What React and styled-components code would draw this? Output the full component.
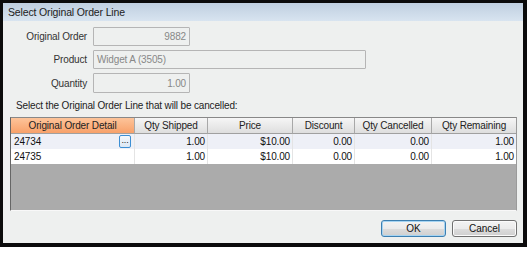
import styled, {createGlobalStyle} from 'styled-components'

const GlobalStyle = createGlobalStyle`
  body {
    margin: 0;
    background: #ffffff;
    font-family: 'Liberation Sans', Arial, sans-serif;
    letter-spacing: -0.15px;
  }
`

const Frame = styled.div`
  box-sizing: border-box;
  width: 527px;
  height: 247px;
  border: 3px solid #0b0b0b;
  border-right-width: 4px;
  border-bottom-width: 4px;
  background: #eef0ef;
  display: flex;
  flex-direction: column;
`

const TitleBar = styled.div`
  height: 20px;
  display: flex;
  align-items: center;
  padding-left: 5px;
  background: linear-gradient(#bfcfe0, #d8e4f0);
  color: #222;
  font-size: 10.5px;
`

const Body = styled.div`
  flex: 1;
  display: flex;
  flex-direction: column;
  padding: 6px 6px 6px 7px;
`

const Form = styled.div`
  display: grid;
  grid-template-columns: 77px auto;
  column-gap: 6px;
  row-gap: 4px;
  align-items: center;
  justify-items: start;
`

const Label = styled.div`
  justify-self: end;
  font-size: 10px;
  color: #333;
`

const Field = styled.div`
  box-sizing: border-box;
  width: ${p => p.$width}px;
  height: ${p => p.$height || 19}px;
  border: 1px solid #b5b5b5;
  border-radius: 1px;
  background: #eef0ef;
  color: #888;
  font-size: 10px;
  display: flex;
  align-items: center;
  justify-content: ${p => (p.$right ? 'flex-end' : 'flex-start')};
  padding: 0 3px;
`

const Instruction = styled.div`
  margin: 7px 0 6px 6px;
  font-size: 10px;
  color: #222;
`

const GridBox = styled.div`
  box-sizing: border-box;
  width: 507px;
  height: 94px;
  border: 1px solid #9a9a9a;
  border-left-color: #666;
  border-top-color: #888;
  border-bottom: 1px solid #f8f8f8;
  background: #ababab;
  display: flex;
  flex-direction: column;
`

const Row = styled.div`
  display: grid;
  grid-template-columns: 124px 73px 85px 62px 77px 84px;
  height: ${p => (p.$head ? 16 : 15)}px;
  background: ${p => (p.$alt ? '#eef0f7' : '#ffffff')};
`

const HeadCell = styled.div`
  box-sizing: border-box;
  display: flex;
  align-items: center;
  justify-content: center;
  font-size: 10px;
  color: #222;
  border-right: 1px solid #a8a8a8;
  border-bottom: 1px solid #a0a0a0;
  background: ${p =>
    p.$active
      ? 'linear-gradient(#fdc49a, #f8a16a)'
      : 'linear-gradient(#f6f6f6, #dedede)'};
  &:last-child {
    border-right: none;
  }
`

const Cell = styled.div`
  box-sizing: border-box;
  display: flex;
  align-items: center;
  justify-content: ${p => (p.$left ? 'space-between' : 'flex-end')};
  padding: 0 2px 0 3px;
  font-size: 10px;
  color: #111;
  border-right: 1px solid #e4e4e4;
  &:last-child {
    border-right: none;
  }
`

const EllipsisButton = styled.div`
  box-sizing: border-box;
  width: 12px;
  height: 13px;
  border: 1px solid #3d8fd4;
  border-radius: 2px;
  background: linear-gradient(#f4f8fc, #dce8f4);
  font-size: 9px;
  line-height: 9px;
  text-align: center;
  color: #222;
  margin-right: 1px;
`

const Footer = styled.div`
  display: flex;
  justify-content: flex-end;
  gap: 6px;
  margin-top: 9px;
`

const Button = styled.button`
  box-sizing: border-box;
  width: 65px;
  height: 17px;
  padding: 0;
  font-family: 'Liberation Sans', Arial, sans-serif;
  font-size: 10px;
  color: #111;
  border: 1px solid ${p => (p.$default ? '#3c7fb1' : '#707070')};
  border-radius: 3px;
  background: linear-gradient(#f3f3f3 0%, #ebebeb 50%, #dddddd 51%, #cfcfcf 100%);
  box-shadow: inset 0 0 0 1px ${p => (p.$default ? '#a6d4f2' : '#fbfbfb')};
`

const columns = [
  'Original Order Detail',
  'Qty Shipped',
  'Price',
  'Discount',
  'Qty Cancelled',
  'Qty Remaining',
]

const lines = [
  {id: '24734', values: ['1.00', '$10.00', '0.00', '0.00', '1.00']},
  {id: '24735', values: ['1.00', '$10.00', '0.00', '0.00', '1.00']},
]

export default function App() {
  return (
    <>
      <GlobalStyle />
      <Frame>
        <TitleBar>Select Original Order Line</TitleBar>
        <Body>
          <Form>
            <Label>Original Order</Label>
            <Field $width={97} $right>
              9882
            </Field>
            <Label>Product</Label>
            <Field $width={273}>Widget A (3505)</Field>
            <Label>Quantity</Label>
            <Field $width={97} $height={20} $right>
              1.00
            </Field>
          </Form>
          <Instruction>
            Select the Original Order Line that will be cancelled:
          </Instruction>
          <GridBox>
            <Row $head>
              {columns.map((c, i) => (
                <HeadCell key={c} $active={i === 0}>
                  {c}
                </HeadCell>
              ))}
            </Row>
            {lines.map((line, i) => (
              <Row key={line.id} $alt={i === 0}>
                <Cell $left>
                  {line.id}
                  {i === 0 && <EllipsisButton>...</EllipsisButton>}
                </Cell>
                {line.values.map((v, j) => (
                  <Cell key={j}>{v}</Cell>
                ))}
              </Row>
            ))}
          </GridBox>
          <Footer>
            <Button $default>OK</Button>
            <Button>Cancel</Button>
          </Footer>
        </Body>
      </Frame>
    </>
  )
}
